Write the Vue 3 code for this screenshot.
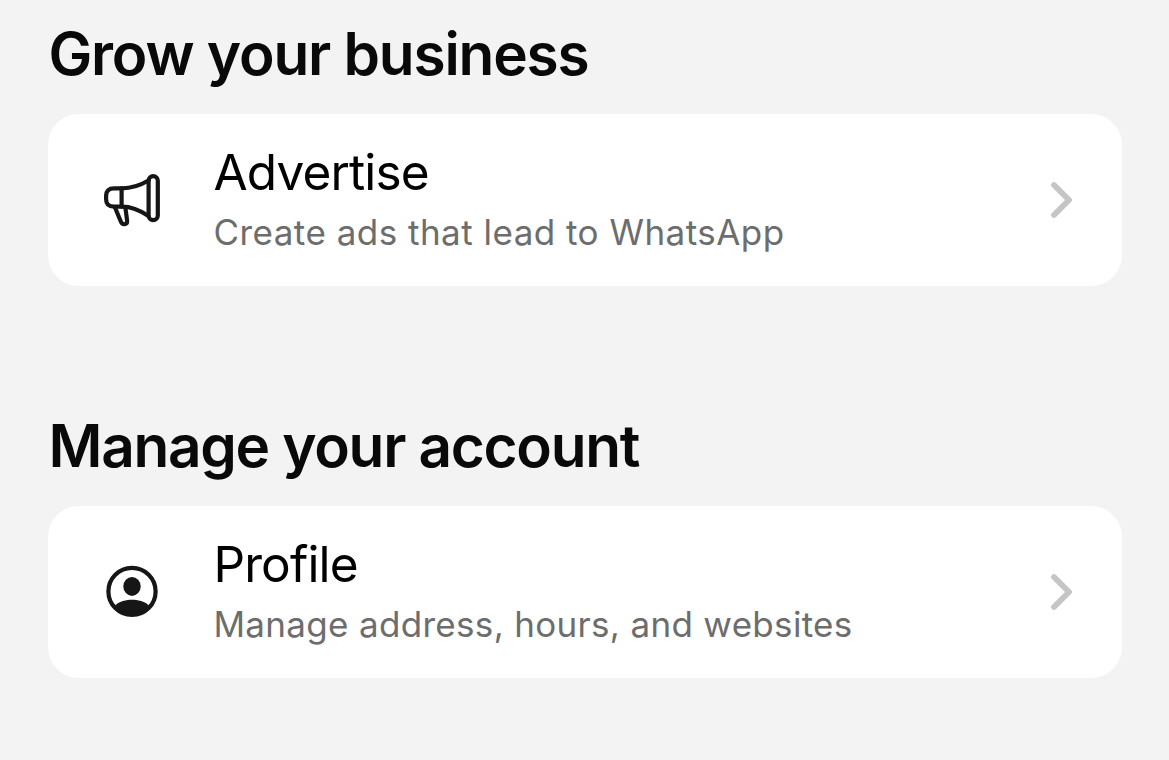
<script setup>
const sections = [
  { key: 'grow', heading: 'Grow your business', title: 'Advertise', detail: 'Create ads that lead to WhatsApp' },
  { key: 'manage', heading: 'Manage your account', title: 'Profile', detail: 'Manage address, hours, and websites' },
]
</script>

<template>
  <main class="page">
    <section v-for="s in sections" :key="s.key" class="section" :class="s.key">
      <h2>{{ s.heading }}</h2>
      <div class="card">
        <svg v-if="s.key === 'grow'" class="icon" viewBox="0 0 80 80" fill="none" stroke="#161616" stroke-width="4.2" stroke-linejoin="round" stroke-linecap="round">
          <path d="M56.5 20.5 C48 25.5 39 28.3 30 28.3 H22 Q14.1 28.3 14.1 35.8 V39.3 Q14.1 46.6 22 46.6 H30 C39 46.6 48 50.3 56.5 56" />
          <path d="M29.6 28.3 V46.6" />
          <rect x="56.6" y="16.2" width="9.2" height="44" rx="4.6" />
          <path d="M23 47.5 L28.6 61 Q30 64.6 32.8 64.2 Q35.4 63.8 35.1 60.5 L33.5 48.5" />
        </svg>
        <svg v-else class="icon" viewBox="0 0 80 80">
          <circle cx="40" cy="39.4" r="23.6" fill="none" stroke="#161616" stroke-width="4.2" />
          <ellipse cx="40" cy="34.4" rx="8.7" ry="9.5" fill="#161616" />
          <path d="M22.5 54.5 C28 45.5 52 45.5 57.5 54.5 A23.6 23.6 0 0 1 22.5 54.5Z" fill="#161616" />
        </svg>
        <div class="copy">
          <div class="title">{{ s.title }}</div>
          <div class="detail">{{ s.detail }}</div>
        </div>
        <svg class="chevron" viewBox="0 0 60 60" fill="none"><path d="M24 15 L39 30 L24 45" stroke="#c5c5c7" stroke-width="5.8" stroke-linecap="round" stroke-linejoin="round" /></svg>
      </div>
    </section>
  </main>
</template>

<style>
body { background: #f3f3f3; }
</style>

<style scoped>
.page { box-sizing: border-box; width: 1169px; height: 760px; padding: 18px 47px 0 48px; background: #f3f3f3; font-family: Inter, "Liberation Sans", sans-serif; overflow: hidden; }
.section { height: 392px; }
h2 { margin: 0; height: 96px; padding-left: 0.5px; box-sizing: border-box; font-size: 58.5px; line-height: 72px; font-weight: 600; color: #090909; white-space: nowrap; letter-spacing: -1.2px; }
.manage h2 { letter-spacing: -1.3px; }
.card { height: 172px; box-sizing: border-box; border-radius: 31px; background: #fff; display: flex; align-items: center; padding: 0 32px 0 44px; }
.icon { width: 80px; height: 80px; flex: none; }
.copy { margin-left: 41.4px; flex: 1; white-space: nowrap; height: 172px; box-sizing: border-box; padding-top: 26px; }
.title { font-size: 49.5px; line-height: 64px; color: #000; letter-spacing: -0.85px; }
.detail { font-size: 35px; line-height: 46px; margin-top: 5px; color: #6d6d6d; letter-spacing: 0.48px; }
.manage .detail { letter-spacing: 0.32px; }
.chevron { width: 60px; height: 60px; flex: none; }
</style>
